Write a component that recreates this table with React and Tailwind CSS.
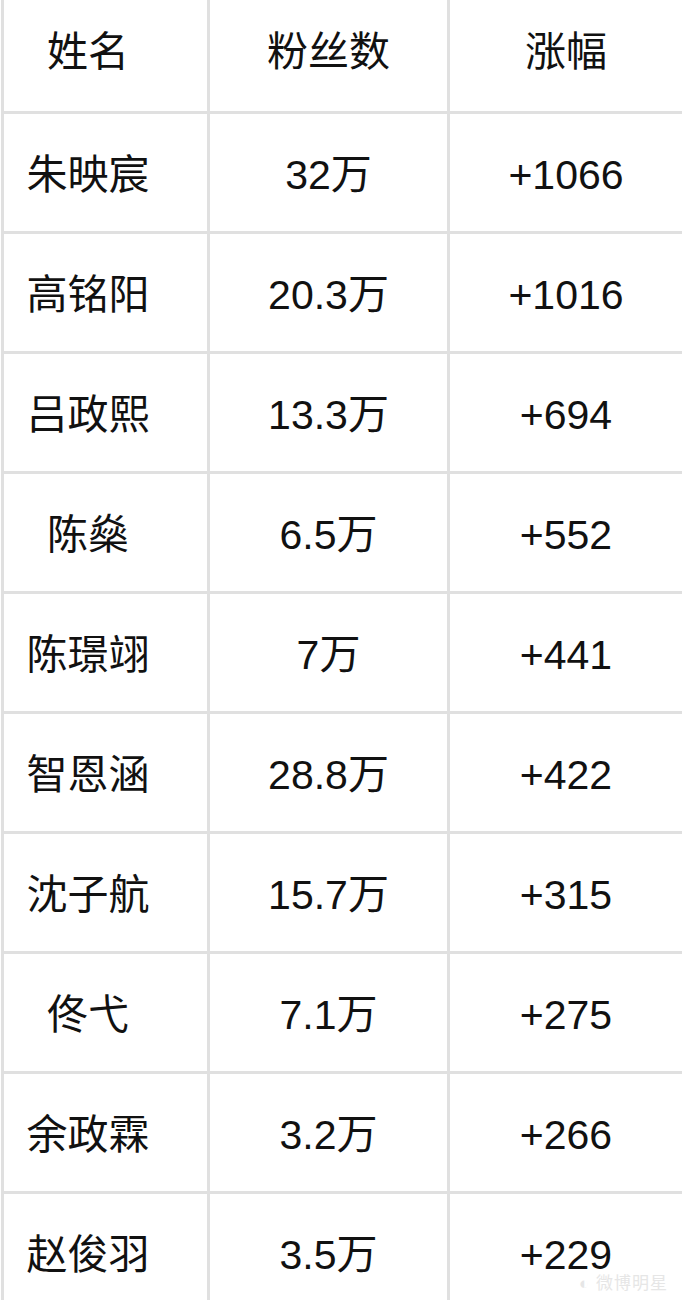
import React from "react";

const rows = [
  ["朱映宸", "32万", "+1066"],
  ["高铭阳", "20.3万", "+1016"],
  ["吕政熙", "13.3万", "+694"],
  ["陈燊", "6.5万", "+552"],
  ["陈璟翊", "7万", "+441"],
  ["智恩涵", "28.8万", "+422"],
  ["沈子航", "15.7万", "+315"],
  ["佟弋", "7.1万", "+275"],
  ["余政霖", "3.2万", "+266"],
  ["赵俊羽", "3.5万", "+229"],
];

export default function App() {
  const font = { fontFamily: '"Liberation Sans", "Noto Sans CJK SC", sans-serif' };
  return (
    <div className="relative w-[682px] h-[1300px] overflow-hidden bg-white text-[#111]" style={font}>
      <div className="ml-[1px] pl-[3px] bg-[#e0e0e0] grid grid-cols-[203px_237px_1fr] auto-rows-[117px] grid-rows-[111px] gap-[3px] text-[41px] leading-none">
        <div className="bg-white flex items-center justify-center pr-[35px] pb-[6px]">姓名</div>
        <div className="bg-white flex items-center justify-center pb-[6px]">粉丝数</div>
        <div className="bg-white flex items-center justify-center pb-[6px]">涨幅</div>
        {rows.map((r, i) => (
          <React.Fragment key={i}>
            <div className="bg-white flex items-center justify-center pr-[35px] pt-[5px]">{r[0]}</div>
            <div className="bg-white flex items-center justify-center pt-[5px]">{r[1]}</div>
            <div className="bg-white flex items-center justify-center pt-[5px]">{r[2]}</div>
          </React.Fragment>
        ))}
      </div>
      <div className="absolute right-[14px] bottom-[4px] text-[17px] text-[#e6e6e6] tracking-[1px]">◐ 微博明星</div>
    </div>
  );
}
